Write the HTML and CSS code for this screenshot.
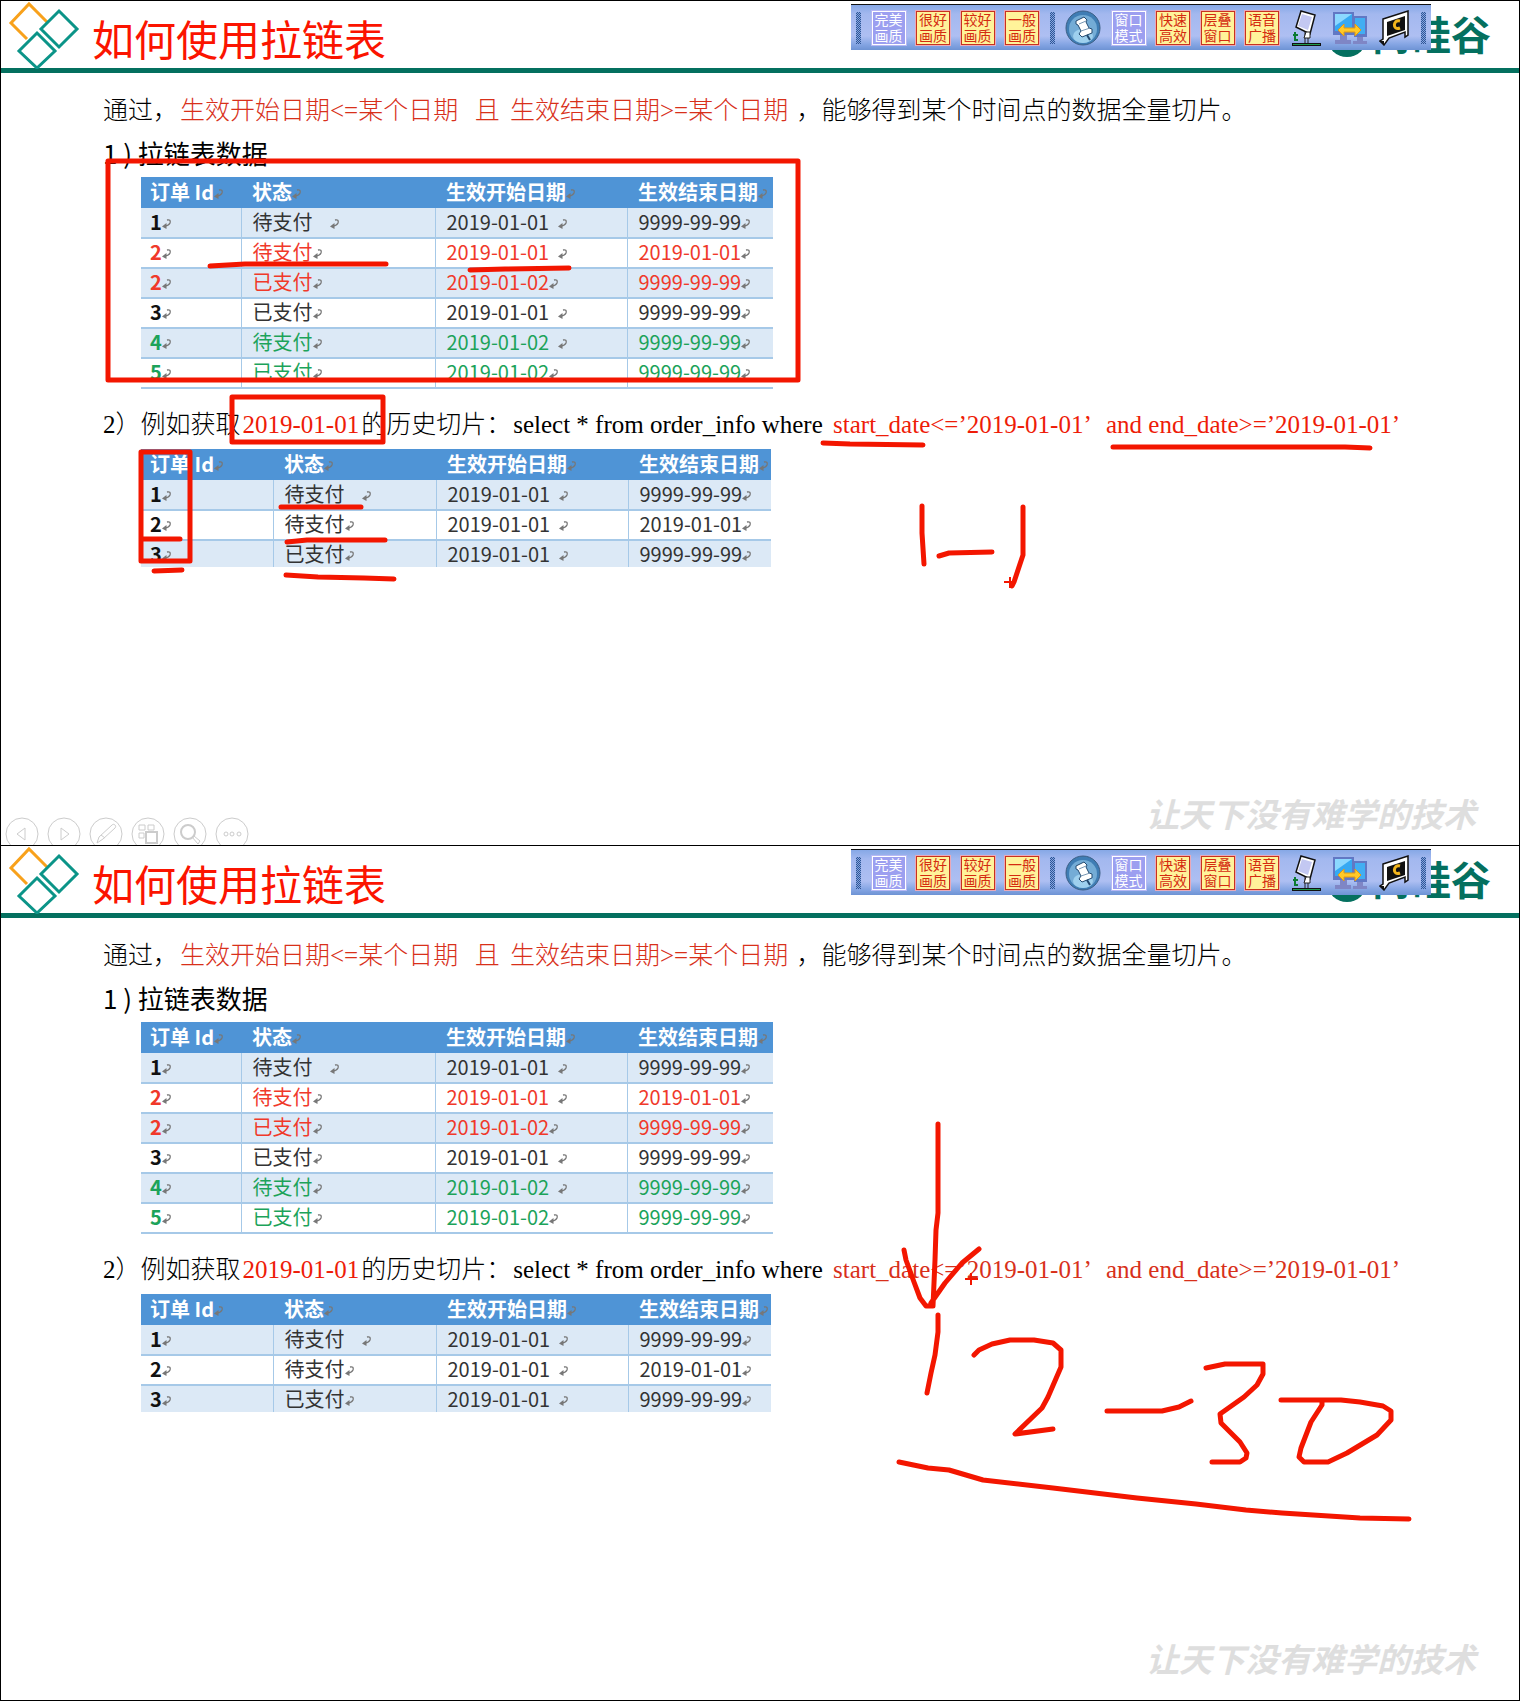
FILE: index.html
```html
<!DOCTYPE html>
<html lang="zh-CN">
<head>
<meta charset="utf-8">
<title>如何使用拉链表</title>
<link rel="stylesheet" href="styles.css">
</head>
<body>
<svg class="defs" aria-hidden="true">
  <symbol id="ret" viewBox="0 0 9 12"><path d="M5 2Q9 1 8 5Q7 7.500 3 8" fill="none" stroke="currentColor" stroke-width="1.300"/><path d="M0 8.500L4.500 5V11Z" fill="currentColor"/></symbol>
  <symbol id="brand" viewBox="0 0 72 68">
    <path d="M39 21L21 3L3 22L19 38" fill="none" stroke="#f8a11b" stroke-width="3"/>
    <path d="M51 10L69 28L51 46L33 28Z" fill="#fff" stroke="#0b9488" stroke-width="3"/>
    <path d="M29 32L47 50L29 67L11 50Z" fill="#fff" stroke="#0b9488" stroke-width="3"/>
  </symbol>
  <symbol id="pin" viewBox="0 0 36 36">
    <circle cx="18" cy="18" r="17" fill="#3f7db4" stroke="#3c5f85"/>
    <circle cx="18" cy="19" r="14" fill="#74acd6"/>
    <ellipse cx="18" cy="26" rx="10" ry="7" fill="#9ed0ee"/>
    <path d="M11 11L19 7L22 10L21 12L24 18L27 19L27 23L17 27L14 24L16 21L13 15L11 14Z" fill="#fff" stroke="#234a70"/>
    <path d="M14 14L21 11M16 21L25 18" stroke="#7897b3" fill="none"/><path d="M22 25L25 30" stroke="#234a70" stroke-width="2"/>
  </symbol>
  <symbol id="pad" viewBox="0 0 32 36">
    <path d="M11 1L25 5L20 24L6 17Z" fill="#fff" stroke="#111" stroke-width="1.500"/><path d="M12 4L22 7L18 20L8 16Z" fill="#c3c8f2"/>
    <path d="M15 22V33M18 24V33" stroke="#222"/><path d="M16 22H20V28H14Z" fill="#fff" stroke="#222"/>
    <path d="M2 34.500H31" stroke="#111" stroke-width="3"/><path d="M3 34.500H30" stroke="#1f9a4a"/>
    <path d="M5 22V30H8M3 25H8" fill="none" stroke="#0c7b31" stroke-width="2"/>
  </symbol>
  <symbol id="link" viewBox="0 0 36 36">
    <path d="M1 2H22V25H1Z" fill="#6178c4"/><path d="M3 4H20V21H3Z" fill="#36a9f2"/><path d="M3 4H20L3 16Z" fill="#8bd8ff"/>
    <path d="M22 6H35V27H22Z" fill="#6178c4"/><path d="M23 8H33V24H23Z" fill="#42aef2"/>
    <path d="M8 25H15V30H19V34H3V30H8ZM25 27H31V31H35V34H21V31H25Z" fill="#7f86c5"/>
    <path d="M6 20L12 14V18H23V14L29 20L23 26V22H12V26Z" fill="#ffc928" stroke="#e29a12"/>
  </symbol>
  <symbol id="screen" viewBox="0 0 32 36">
    <path d="M4 9L29 1V25L26 27V22L10 28L5 35L1 31L4 29Z" fill="#fff" stroke="#111" stroke-width="1.500"/>
    <path d="M8 12L26 6V20L8 26Z" fill="#111"/><path d="M21 11C14 9 13 21 21 18" fill="none" stroke="#f3b51c" stroke-width="3"/><path d="M0 31H5V35Z" fill="#111"/>
  </symbol>
</svg>

<section class="slide">
  <header class="head">
    <svg class="brand"><use href="#brand"/></svg>
    <h1>如何使用拉链表</h1>
    <div class="logo"><svg viewBox="0 0 40 40"><circle cx="20" cy="20" r="20" fill="#04705f"/></svg><span>尚硅谷</span></div>
    <div class="bar" role="toolbar" aria-label="画质与窗口">
      <i class="grip"></i>
      <button class="key off">完美<br>画质</button><button class="key">很好<br>画质</button><button class="key">较好<br>画质</button><button class="key">一般<br>画质</button>
      <i class="grip"></i>
      <button class="pic wide" aria-label="固定"><svg><use href="#pin"/></svg></button>
      <button class="key off">窗口<br>模式</button><button class="key">快速<br>高效</button><button class="key">层叠<br>窗口</button><button class="key">语音<br>广播</button>
      <button class="pic" aria-label="手写板"><svg><use href="#pad"/></svg></button>
      <button class="pic wide" aria-label="连接"><svg><use href="#link"/></svg></button>
      <button class="pic" aria-label="屏幕"><svg><use href="#screen"/></svg></button>
      <i class="grip"></i>
    </div>
  </header>
  <main class="content">
    <p class="line">通过，<span class="hot">生效开始日期&lt;=某个日期</span>  <span class="hot">且</span> <span class="hot">生效结束日期&gt;=某个日期</span> ，能够得到某个时间点的数据全量切片。</p>
    <h2 class="line sub">1 ) 拉链表数据</h2>
    <table class="grid">
      <colgroup><col class="c-id"><col class="c-state"><col class="c-start"><col class="c-end"></colgroup>
      <thead><tr><th>订单 Id<svg><use href="#ret"/></svg></th><th>状态<svg><use href="#ret"/></svg></th><th>生效开始日期<svg><use href="#ret"/></svg></th><th>生效结束日期<svg><use href="#ret"/></svg></th></tr></thead>
      <tbody>
        <tr><td>1<svg><use href="#ret"/></svg></td><td>待支付    <svg><use href="#ret"/></svg></td><td>2019-01-01  <svg><use href="#ret"/></svg></td><td>9999-99-99<svg><use href="#ret"/></svg></td></tr>
        <tr class="red"><td>2<svg><use href="#ret"/></svg></td><td>待支付<svg><use href="#ret"/></svg></td><td>2019-01-01  <svg><use href="#ret"/></svg></td><td>2019-01-01<svg><use href="#ret"/></svg></td></tr>
        <tr class="red"><td>2<svg><use href="#ret"/></svg></td><td>已支付<svg><use href="#ret"/></svg></td><td>2019-01-02<svg><use href="#ret"/></svg></td><td>9999-99-99<svg><use href="#ret"/></svg></td></tr>
        <tr><td>3<svg><use href="#ret"/></svg></td><td>已支付<svg><use href="#ret"/></svg></td><td>2019-01-01  <svg><use href="#ret"/></svg></td><td>9999-99-99<svg><use href="#ret"/></svg></td></tr>
        <tr class="green"><td>4<svg><use href="#ret"/></svg></td><td>待支付<svg><use href="#ret"/></svg></td><td>2019-01-02  <svg><use href="#ret"/></svg></td><td>9999-99-99<svg><use href="#ret"/></svg></td></tr>
        <tr class="green"><td>5<svg><use href="#ret"/></svg></td><td>已支付<svg><use href="#ret"/></svg></td><td>2019-01-02<svg><use href="#ret"/></svg></td><td>9999-99-99<svg><use href="#ret"/></svg></td></tr>
      </tbody>
    </table>
    <p class="line query">2）例如获取<span class="hot vivid">2019-01-01</span>的历史切片：<span class="sql">select * from order_info where <span class="cond vivid">start_date&lt;=’2019-01-01’</span> <span class="cond vivid">and end_date&gt;=’2019-01-01’</span></span></p>
    <table class="grid result">
      <colgroup><col class="c-id"><col class="c-state"><col class="c-start"><col class="c-end"></colgroup>
      <thead><tr><th>订单 Id<svg><use href="#ret"/></svg></th><th>状态<svg><use href="#ret"/></svg></th><th>生效开始日期<svg><use href="#ret"/></svg></th><th>生效结束日期<svg><use href="#ret"/></svg></th></tr></thead>
      <tbody>
        <tr><td>1<svg><use href="#ret"/></svg></td><td>待支付    <svg><use href="#ret"/></svg></td><td>2019-01-01  <svg><use href="#ret"/></svg></td><td>9999-99-99<svg><use href="#ret"/></svg></td></tr>
        <tr><td>2<svg><use href="#ret"/></svg></td><td>待支付<svg><use href="#ret"/></svg></td><td>2019-01-01  <svg><use href="#ret"/></svg></td><td>2019-01-01<svg><use href="#ret"/></svg></td></tr>
        <tr><td>3<svg><use href="#ret"/></svg></td><td>已支付<svg><use href="#ret"/></svg></td><td>2019-01-01  <svg><use href="#ret"/></svg></td><td>9999-99-99<svg><use href="#ret"/></svg></td></tr>
      </tbody>
    </table>
  </main>
  <footer class="foot">
    <nav class="pager" aria-label="放映控制">
      <button aria-label="上一张"><svg viewBox="0 0 34 34"><circle cx="17" cy="17" r="16"/><path d="M20 11V23L12 17Z"/></svg></button>
      <button aria-label="下一张"><svg viewBox="0 0 34 34"><circle cx="17" cy="17" r="16"/><path d="M14 11V23L22 17Z"/></svg></button>
      <button aria-label="画笔"><svg viewBox="0 0 34 34"><circle cx="17" cy="17" r="16"/><path d="M8 26L10 20L23 8C25 6 28 9 26 11L14 22ZM12 18L16 21"/></svg></button>
      <button aria-label="全部幻灯片"><svg viewBox="0 0 34 34"><circle cx="17" cy="17" r="16"/><path d="M8 8H14V13H8ZM17 8H23V13H17ZM8 16H13V21H8Z"/><path d="M15 15H26V26H15Z" stroke-width="2"/></svg></button>
      <button aria-label="放大"><svg viewBox="0 0 34 34"><circle cx="17" cy="17" r="16"/><circle cx="15" cy="15" r="7" stroke-width="2"/><path d="M19 20L21 19L27 24L25 27Z"/></svg></button>
      <button aria-label="更多"><svg viewBox="0 0 34 34"><circle cx="17" cy="17" r="16"/><circle cx="11" cy="17" r="2"/><circle cx="17" cy="17" r="2"/><circle cx="24" cy="17" r="2"/></svg></button>
    </nav>
    <p class="motto">让天下没有难学的技术</p>
  </footer>
  <svg class="ink" aria-hidden="true">
    <path d="M108 161H798V380H108ZM232 397H383V442H232ZM141 452H190V561H141Z"/>
    <path d="M210 266L245 264H386M470 270L505 269L569 268M281 507H361M287 542L307 540H385M286 575L318 577L364 578L394 579M143 539H180M154 571L182 570"/>
    <path d="M823 443L850 444L923 445M1113 447H1345L1370 448M922 506L922 533L924 564M939 556L949 553L992 552M1023 507V555L1014 582L1012 586"/>
    <path class="cross" d="M1004 582H1014M1010 577V588"/>
  </svg>
</section>

<section class="slide">
  <header class="head">
    <svg class="brand"><use href="#brand"/></svg>
    <h1>如何使用拉链表</h1>
    <div class="logo"><svg viewBox="0 0 40 40"><circle cx="20" cy="20" r="20" fill="#04705f"/></svg><span>尚硅谷</span></div>
    <div class="bar" role="toolbar" aria-label="画质与窗口">
      <i class="grip"></i>
      <button class="key off">完美<br>画质</button><button class="key">很好<br>画质</button><button class="key">较好<br>画质</button><button class="key">一般<br>画质</button>
      <i class="grip"></i>
      <button class="pic wide" aria-label="固定"><svg><use href="#pin"/></svg></button>
      <button class="key off">窗口<br>模式</button><button class="key">快速<br>高效</button><button class="key">层叠<br>窗口</button><button class="key">语音<br>广播</button>
      <button class="pic" aria-label="手写板"><svg><use href="#pad"/></svg></button>
      <button class="pic wide" aria-label="连接"><svg><use href="#link"/></svg></button>
      <button class="pic" aria-label="屏幕"><svg><use href="#screen"/></svg></button>
      <i class="grip"></i>
    </div>
  </header>
  <main class="content">
    <p class="line">通过，<span class="hot">生效开始日期&lt;=某个日期</span>  <span class="hot">且</span> <span class="hot">生效结束日期&gt;=某个日期</span> ，能够得到某个时间点的数据全量切片。</p>
    <h2 class="line sub">1 ) 拉链表数据</h2>
    <table class="grid">
      <colgroup><col class="c-id"><col class="c-state"><col class="c-start"><col class="c-end"></colgroup>
      <thead><tr><th>订单 Id<svg><use href="#ret"/></svg></th><th>状态<svg><use href="#ret"/></svg></th><th>生效开始日期<svg><use href="#ret"/></svg></th><th>生效结束日期<svg><use href="#ret"/></svg></th></tr></thead>
      <tbody>
        <tr><td>1<svg><use href="#ret"/></svg></td><td>待支付    <svg><use href="#ret"/></svg></td><td>2019-01-01  <svg><use href="#ret"/></svg></td><td>9999-99-99<svg><use href="#ret"/></svg></td></tr>
        <tr class="red"><td>2<svg><use href="#ret"/></svg></td><td>待支付<svg><use href="#ret"/></svg></td><td>2019-01-01  <svg><use href="#ret"/></svg></td><td>2019-01-01<svg><use href="#ret"/></svg></td></tr>
        <tr class="red"><td>2<svg><use href="#ret"/></svg></td><td>已支付<svg><use href="#ret"/></svg></td><td>2019-01-02<svg><use href="#ret"/></svg></td><td>9999-99-99<svg><use href="#ret"/></svg></td></tr>
        <tr><td>3<svg><use href="#ret"/></svg></td><td>已支付<svg><use href="#ret"/></svg></td><td>2019-01-01  <svg><use href="#ret"/></svg></td><td>9999-99-99<svg><use href="#ret"/></svg></td></tr>
        <tr class="green"><td>4<svg><use href="#ret"/></svg></td><td>待支付<svg><use href="#ret"/></svg></td><td>2019-01-02  <svg><use href="#ret"/></svg></td><td>9999-99-99<svg><use href="#ret"/></svg></td></tr>
        <tr class="green"><td>5<svg><use href="#ret"/></svg></td><td>已支付<svg><use href="#ret"/></svg></td><td>2019-01-02<svg><use href="#ret"/></svg></td><td>9999-99-99<svg><use href="#ret"/></svg></td></tr>
      </tbody>
    </table>
    <p class="line query">2）例如获取<span class="hot vivid">2019-01-01</span>的历史切片：<span class="sql">select * from order_info where <span class="cond">start_date&lt;=’2019-01-01’</span> <span class="cond">and end_date&gt;=’2019-01-01’</span></span></p>
    <table class="grid result">
      <colgroup><col class="c-id"><col class="c-state"><col class="c-start"><col class="c-end"></colgroup>
      <thead><tr><th>订单 Id<svg><use href="#ret"/></svg></th><th>状态<svg><use href="#ret"/></svg></th><th>生效开始日期<svg><use href="#ret"/></svg></th><th>生效结束日期<svg><use href="#ret"/></svg></th></tr></thead>
      <tbody>
        <tr><td>1<svg><use href="#ret"/></svg></td><td>待支付    <svg><use href="#ret"/></svg></td><td>2019-01-01  <svg><use href="#ret"/></svg></td><td>9999-99-99<svg><use href="#ret"/></svg></td></tr>
        <tr><td>2<svg><use href="#ret"/></svg></td><td>待支付<svg><use href="#ret"/></svg></td><td>2019-01-01  <svg><use href="#ret"/></svg></td><td>2019-01-01<svg><use href="#ret"/></svg></td></tr>
        <tr><td>3<svg><use href="#ret"/></svg></td><td>已支付<svg><use href="#ret"/></svg></td><td>2019-01-01  <svg><use href="#ret"/></svg></td><td>9999-99-99<svg><use href="#ret"/></svg></td></tr>
      </tbody>
    </table>
  </main>
  <footer class="foot">
    <p class="motto">让天下没有难学的技术</p>
  </footer>
  <svg class="ink" aria-hidden="true">
    <path d="M938 279V368L936 385L935 415L933 461M904 405L906 415L914 437L920 453L926 461H933M979 404L962 418L945 438L931 458"/>
    <path d="M938 470V487L935 510L931 528L927 548M974 510L979 505L992 499L1010 495H1034L1053 498L1061 505V522L1048 552L1042 563L1015 589L1053 584"/>
    <path d="M1107 566H1162L1179 562L1191 556M1206 523L1225 519H1263V529L1257 540L1244 552L1220 569L1221 578L1240 597L1247 608L1246 613L1240 617H1212"/>
    <path d="M1281 555H1341L1360 557L1383 561L1391 566V575L1377 590L1347 608L1328 617H1304L1299 612L1301 603L1311 577L1322 560V557"/>
    <path d="M899 617L928 623L949 625L983 635L1053 643L1137 653L1196 659L1246 665L1282 668L1360 673L1409 674"/>
    <path class="cross" d="M965 434H978M971 428V440"/>
  </svg>
</section>
</body>
</html>
```
FILE: styles.css
```css
* { box-sizing: border-box; }

body {
  margin: 0;
  min-height: 100vh;
  display: flex;
  flex-direction: column;
  background: #fff;
  color: #000;
  font-family: "Noto Sans CJK SC", sans-serif;
}

h1, h2, p { margin: 0; font-weight: 400; }

button { padding: 0; border: 0; background: none; font: inherit; }

.defs { position: absolute; width: 0; height: 0; }

.slide {
  position: relative;
  display: flex;
  flex-direction: column;
  min-height: 845px;
  overflow: hidden;
  border: solid #000;
  border-width: 1px 1px 0;
}

.slide:last-child {
  flex: 1;
  padding-bottom: 10px;
  border-bottom-width: 1px;
}

/* header */
.head {
  position: relative;
  display: flex;
  height: 72px;
  padding-left: 7px;
  border-bottom: 5px solid #04705f;
}

.brand { width: 72px; height: 68px; }

h1 {
  padding: 11px 0 0 12px;
  font-size: 42px;
  line-height: 52px;
  color: #fb1400;
}

.logo {
  display: flex;
  gap: 4px;
  margin-left: auto;
  padding: 16px 28px 0 0;
  color: #04705f;
  font-size: 40px;
  font-weight: 700;
  line-height: 32px;
}

.logo svg { width: 40px; height: 40px; }

.bar {
  position: absolute;
  top: 1px;
  right: 88px;
  display: flex;
  align-items: center;
  justify-content: space-between;
  width: 580px;
  height: 48px;
  padding: 4px 5px 0;
  background: linear-gradient(#fff 0 2px, #111 2px 3px, #86a8e6 3px, #a3b8ef 12px, #aebff2 34px, #86a6e4 42px, #6e93d4);
}

.grip {
  width: 5px;
  height: 32px;
  background: repeating-conic-gradient(#2f5596 0 25%, #86a6e0 0 50%) 0 0 / 2px 2px;
}

.key {
  width: 34px;
  height: 34px;
  border: 1px solid #c8321e;
  outline: 1px solid #e9a9b8;
  background: #fff39a;
  color: #d42a10;
  font: 14px/16px "Liberation Sans", "Noto Sans CJK SC", sans-serif;
  text-align: center;
}

.key.off {
  border-color: #fff;
  outline-color: #b6b8f5;
  background: #9c9ff0;
  color: #fff;
}

.pic { width: 32px; height: 36px; }
.pic.wide { width: 36px; }
.pic svg { display: block; width: 100%; height: 100%; }

/* slide text */
.content { flex: 1; padding: 18px 80px 0 102px; }

.line {
  font: 300 25px/40px "Liberation Serif", "Noto Sans CJK SC", serif;
  white-space: pre;
}

.sub {
  margin: 2px 0 4px;
  font: 400 26px/40px "Noto Sans CJK SC", sans-serif;
}

.query { margin: 16px 0 4px; }

.hot { padding: 0 2px; color: #d8301a; }
.cond { padding: 0 4px; color: #d8301a; }
.vivid { color: #ee1c08; }
.sql { padding-left: 2px; }

/* tables */
.grid {
  table-layout: fixed;
  width: 632px;
  margin-left: 38px;
  border-collapse: collapse;
  font-size: 20px;
  line-height: 24px;
  color: #333;
  white-space: pre;
}

.c-id { width: 100px; }
.c-state { width: 194px; }
.c-start { width: 192px; }

.grid th, .grid td {
  height: 30px;
  padding: 0 0 2px 11px;
  text-align: left;
  font-weight: 400;
  vertical-align: middle;
  border: solid #a6c9e8;
  border-width: 0 0 2px 1px;
}

.grid th {
  height: 31px;
  border: 0;
  background: #4f94d6;
  color: #fff;
  font-weight: 700;
}

.grid th:first-child, .grid td:first-child { padding-left: 9px; border-left: 0; }
.grid td:first-child { color: #111; font-weight: 700; }
.grid tbody tr:nth-child(odd) { background: #dce9f6; }

.grid svg { width: 9px; height: 12px; color: #777; }

.grid .red td { color: #f0392a; }
.grid .green td { color: #1ca35a; }

.result { width: 630px; }
.result .c-id { width: 132px; }
.result .c-state { width: 163px; }
.result tr:last-child td { height: 27px; padding-bottom: 0; border-bottom: 0; }

/* footer */
.foot {
  display: flex;
  align-items: flex-start;
  height: 57px;
  padding: 0 43px 0 4px;
}

.pager {
  display: flex;
  gap: 8px;
  padding-top: 29px;
}

.pager button, .pager svg { display: block; width: 34px; height: 34px; }
.pager svg { fill: none; stroke: #ccc; }

.motto {
  margin-left: auto;
  color: #dedede;
  font-size: 33px;
  font-weight: 700;
  font-style: italic;
  line-height: 50px;
}

/* pen strokes over the slide */
.ink {
  position: absolute;
  top: -1px;
  left: -1px;
  width: 100%;
  height: 100%;
  fill: none;
  stroke: #f31600;
  stroke-width: 5;
  stroke-linecap: round;
  stroke-linejoin: round;
  pointer-events: none;
  overflow: visible;
}

.cross { stroke-width: 2; stroke-linecap: butt; }
```
